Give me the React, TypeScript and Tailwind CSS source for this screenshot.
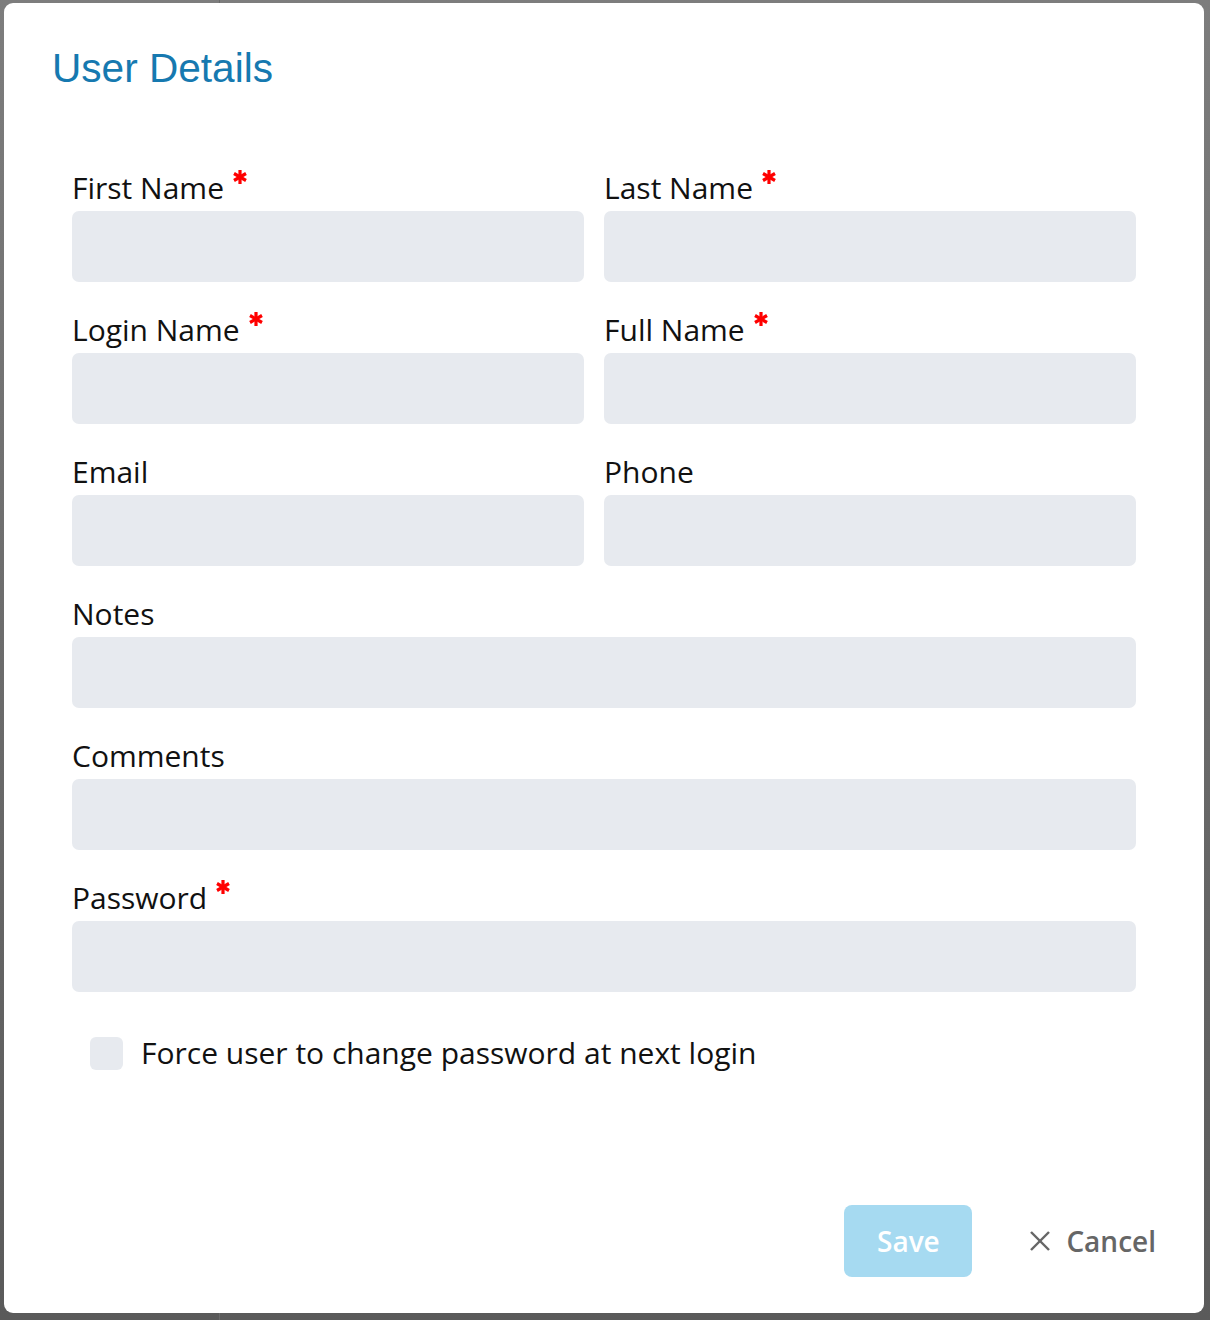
import React from "react";

const font = { fontFamily: '"Open Sans", "Liberation Sans", sans-serif' };

function Asterisk() {
  return (
    <svg
      width="14"
      height="16"
      viewBox="0 0 14 16"
      className="ml-[9px] -mt-[22px] shrink-0"
      aria-hidden="true"
    >
      <g stroke="#ff0000" strokeWidth="3.2" strokeLinecap="butt">
        <line x1="7" y1="1" x2="7" y2="15" />
        <line x1="1" y1="4.5" x2="13" y2="11.5" />
        <line x1="1" y1="11.5" x2="13" y2="4.5" />
      </g>
    </svg>
  );
}

function Field({ label, required }: { label: string; required?: boolean }) {
  return (
    <div className="flex flex-col">
      <label className="flex items-center h-[40px] mb-[3px] text-[30px] leading-[40px] text-[#111]">
        {label}
        {required && <Asterisk />}
      </label>
      <input
        type="text"
        className="h-[71px] w-full rounded-[7px] bg-[#e7eaef] px-4 outline-none"
      />
    </div>
  );
}

export default function App() {
  return (
    <div
      className="relative min-h-[1320px] w-[1210px] bg-gradient-to-b from-[#7d7d7d] to-[#5a5a5a] pt-[3px] pl-[4px] pr-[6px] pb-[7px]"
      style={font}
    >
      <div className="absolute top-0 bottom-0 left-[219px] w-px bg-[#6a6a6a]" />
      <div className="relative flex h-[1310px] w-[1200px] flex-col rounded-[9px] bg-white pt-[45px] pl-[46px] pr-[48px] pb-[36px]">
        <h1
          className="ml-[2px] text-[40.6px] leading-[40px] text-[#1679b0]"
          style={{ fontFamily: '"Liberation Sans", Arial, sans-serif' }}
        >
          User Details
        </h1>

        <div className="mt-[80px] ml-[22px] w-[1064px]">
          <div className="grid grid-cols-[512px_532px] gap-x-[20px] gap-y-[28px]">
            <Field label="First Name" required />
            <Field label="Last Name" required />
            <Field label="Login Name" required />
            <Field label="Full Name" required />
            <Field label="Email" />
            <Field label="Phone" />
            <div className="col-span-2">
              <Field label="Notes" />
            </div>
            <div className="col-span-2">
              <Field label="Comments" />
            </div>
            <div className="col-span-2">
              <Field label="Password" required />
            </div>
          </div>

          <label className="mt-[41px] ml-[18px] flex h-[40px] items-center gap-[18px] text-[30px] leading-[40px] text-[#111]">
            <span className="h-[33px] w-[33px] shrink-0 rounded-[6px] bg-[#e7eaef]" />
            Force user to change password at next login
          </label>
        </div>

        <div className="mt-auto flex items-center justify-end">
          <button className="h-[72px] w-[128px] rounded-[8px] bg-[#a6daf1] text-[28px] font-semibold text-white">
            Save
          </button>
          <button className="ml-[58px] flex items-center gap-[16px] text-[28px] font-semibold text-[#666]">
            <svg width="20" height="20" viewBox="0 0 20 20" aria-hidden="true">
              <g stroke="#666" strokeWidth="2.4">
                <line x1="1" y1="1" x2="19" y2="19" />
                <line x1="19" y1="1" x2="1" y2="19" />
              </g>
            </svg>
            Cancel
          </button>
        </div>
      </div>
    </div>
  );
}
